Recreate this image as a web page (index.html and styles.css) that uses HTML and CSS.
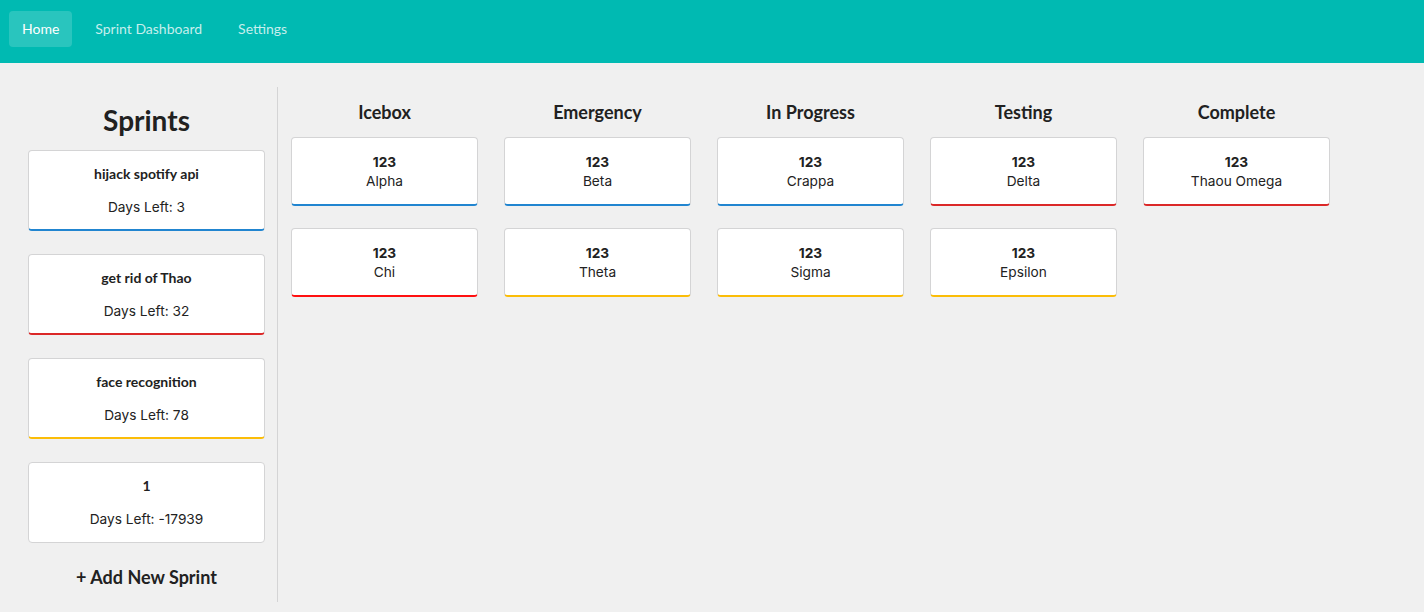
FILE: index.html
```html
<!DOCTYPE html>
<html>
<head>
<meta charset="utf-8">
<link rel="stylesheet" href="styles.css">
</head>
<body>
<nav class="navbar">
  <a class="nav-item active">Home</a>
  <a class="nav-item">Sprint Dashboard</a>
  <a class="nav-item">Settings</a>
</nav>
<div class="layout">
  <aside class="sidebar">
    <h1 class="sidebar-title">Sprints</h1>
    <div class="sprint-list">
      <div class="card sprint-card blue"><div class="sprint-name">hijack spotify api</div><div class="sprint-days">Days Left: 3</div></div>
      <div class="card sprint-card red"><div class="sprint-name">get rid of Thao</div><div class="sprint-days">Days Left: 32</div></div>
      <div class="card sprint-card yellow"><div class="sprint-name">face recognition</div><div class="sprint-days">Days Left: 78</div></div>
      <div class="card sprint-card"><div class="sprint-name">1</div><div class="sprint-days">Days Left: -17939</div></div>
    </div>
    <div class="add-sprint">+ Add New Sprint</div>
  </aside>
  <main class="board">
    <section class="column">
      <h2 class="column-title">Icebox</h2>
      <div class="card task blue"><div class="task-id">123</div><div class="task-name">Alpha</div></div>
      <div class="card task red-bright"><div class="task-id">123</div><div class="task-name">Chi</div></div>
    </section>
    <section class="column">
      <h2 class="column-title">Emergency</h2>
      <div class="card task blue"><div class="task-id">123</div><div class="task-name">Beta</div></div>
      <div class="card task yellow"><div class="task-id">123</div><div class="task-name">Theta</div></div>
    </section>
    <section class="column">
      <h2 class="column-title">In Progress</h2>
      <div class="card task blue"><div class="task-id">123</div><div class="task-name">Crappa</div></div>
      <div class="card task yellow"><div class="task-id">123</div><div class="task-name">Sigma</div></div>
    </section>
    <section class="column">
      <h2 class="column-title">Testing</h2>
      <div class="card task red"><div class="task-id">123</div><div class="task-name">Delta</div></div>
      <div class="card task yellow"><div class="task-id">123</div><div class="task-name">Epsilon</div></div>
    </section>
    <section class="column">
      <h2 class="column-title">Complete</h2>
      <div class="card task red"><div class="task-id">123</div><div class="task-name">Thaou Omega</div></div>
    </section>
  </main>
</div>
</body>
</html>
```
FILE: styles.css
```css
* { box-sizing: border-box; }
html, body { margin: 0; padding: 0; }
body {
  background: #f0f0f0;
  font-family: Lato, "Helvetica Neue", Arial, sans-serif;
  color: #212121;
  width: 1424px;
  height: 612px;
  overflow: hidden;
}
.navbar {
  height: 63px;
  background: #00bab2;
  display: flex;
  align-items: flex-start;
  padding: 11px 0 0 9px;
  gap: 10px;
}
.nav-item {
  height: 36px;
  padding: 0 13px 2px;
  display: flex;
  align-items: center;
  font-size: 14px;
  color: rgba(255,255,255,0.78);
  border-radius: 4px;
}
.nav-item.active {
  background: rgba(255,255,255,0.16);
  color: #fff;
}
.layout {
  display: flex;
  margin-top: 24px;
  height: 515px;
}
.sidebar {
  width: 278px;
  border-right: 1px solid #d4d4d5;
  padding: 0 12px 0 28px;
  display: flex;
  flex-direction: column;
}
.sidebar-title {
  margin: 15px 0 0;
  font-size: 28px;
  line-height: 36px;
  font-weight: 700;
  text-align: center;
}
.sprint-list {
  margin-top: 12px;
  display: flex;
  flex-direction: column;
  gap: 23px;
}
.card {
  background: #fff;
  border: 1px solid #d4d4d5;
  border-radius: 4px;
  text-align: center;
}
.card.blue { border-bottom: 2px solid #2185d0; }
.card.red { border-bottom: 2px solid #db2828; }
.card.red-bright { border-bottom: 2px solid #ff1010; }
.card.yellow { border-bottom: 2px solid #fbbd08; }
.sprint-card {
  height: 81px;
  padding-top: 13px;
}
.sprint-name {
  font-weight: 700;
  font-size: 14px;
  line-height: 20px;
}
.sprint-days {
  font-family: Inter, "Noto Sans", sans-serif;
  font-size: 13.7px;
  line-height: 20px;
  margin-top: 13px;
  color: #222;
}
.add-sprint {
  margin-top: 23px;
  text-align: center;
  font-size: 18px;
  font-weight: 700;
  line-height: 22px;
}
.board {
  display: flex;
  align-items: flex-start;
  padding-left: 13px;
  gap: 26px;
}
.column {
  width: 187px;
  display: flex;
  flex-direction: column;
  gap: 22px;
}
.column-title {
  margin: 12px 0 -10px;
  font-size: 18px;
  line-height: 26px;
  font-weight: 700;
  text-align: center;
}
.task {
  height: 69px;
  padding-top: 15px;
  font-family: Inter, "Noto Sans", sans-serif;
  font-size: 13.7px;
  line-height: 19px;
  color: #222;
}
.task-id { font-weight: 700; }
```
